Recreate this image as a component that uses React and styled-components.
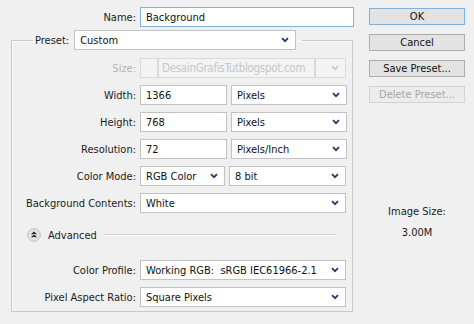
import React from 'react';
import styled, { createGlobalStyle } from 'styled-components';

const GlobalStyle = createGlobalStyle`
  * { box-sizing: border-box; }
  body {
    margin: 0;
    background: #f0f0f0;
    font-family: "DejaVu Sans Condensed", "DejaVu Sans", "Liberation Sans", sans-serif;
    font-stretch: condensed;
    font-size: 11px;
    color: #1b1b1b;
  }
`;

const Dialog = styled.div`
  width: 474px;
  height: 324px;
  display: flex;
  background: #f0f0f0;
`;

const Main = styled.div`
  width: 357px;
  display: flex;
  flex-direction: column;
`;

const Side = styled.div`
  flex: 1;
  padding: 8px 0 0 12px;
  display: flex;
  flex-direction: column;
  align-items: flex-start;
`;

const Row = styled.div`
  display: flex;
  align-items: center;
  height: 20px;
  gap: ${p => p.$gap ?? 4}px;
`;

const NameRow = styled(Row)`
  margin-top: 7px;
`;

const Label = styled.span`
  width: ${p => p.$width}px;
  text-align: right;
  white-space: nowrap;
  color: ${p => (p.$disabled ? '#b4b4b4' : '#1b1b1b')};
`;

const Field = styled.div`
  width: ${p => p.$width}px;
  height: 20px;
  display: flex;
  align-items: center;
  padding: 0 6px 0 5px;
  background: ${p => (p.$disabled ? '#f3f3f3' : '#fff')};
  border: 1px solid ${p => (p.$focus ? '#7eb4ea' : p.$disabled ? '#dadada' : '#c2c2c2')};
  color: ${p => (p.$disabled ? '#c8c8c8' : '#111')};
  white-space: pre;
  overflow: hidden;
`;

const Value = styled.span`
  flex: 1;
`;

const Watermark = styled(Field)`
  font-size: 11.5px;
  letter-spacing: -0.3px;
  padding-left: 3px;
`;

const Group = styled.fieldset`
  margin: 3px 0 0 11px;
  width: 342px;
  padding: 8px 0 4px 0;
  border: 1px solid #c9c9c9;
  box-shadow: inset 1px 1px 0 #fbfbfb;
  display: flex;
  flex-direction: column;
  gap: 7px;
`;

const Legend = styled.legend`
  margin-left: 21px;
  padding: 0 6px 0 2px;
  display: flex;
  align-items: center;
  gap: 5px;
`;

const AdvancedRow = styled.div`
  display: flex;
  align-items: center;
  height: 14px;
  margin: 8px 15px 11px 15px;
  gap: 7px;
`;

const Rule = styled.div`
  flex: 1;
  height: 2px;
  border-top: 1px solid #cfcfcf;
  border-bottom: 1px solid #fafafa;
`;

const Button = styled.div`
  width: 96px;
  height: 17px;
  margin-bottom: 9px;
  display: flex;
  align-items: center;
  justify-content: center;
  background: ${p => (p.$disabled ? '#ececec' : '#e3e3e3')};
  border: 1px solid ${p => (p.$default ? '#7fb0dc' : p.$disabled ? '#d2d2d2' : '#adadad')};
  color: ${p => (p.$disabled ? '#a6a6a6' : '#111')};
`;

const ImageSize = styled.div`
  width: 96px;
  margin-top: 93px;
  display: flex;
  flex-direction: column;
  align-items: center;
  gap: 8px;
  line-height: 13px;
`;

function Chevron({ disabled }) {
  return (
    <svg width="8" height="6" viewBox="0 0 8 6">
      <path d="M1 1.2 L4 4.2 L7 1.2" fill="none" stroke={disabled ? '#c8ccd4' : '#1f3a70'} strokeWidth="1.8" />
    </svg>
  );
}

function CollapseIcon() {
  return (
    <svg width="14" height="14" viewBox="0 0 14 14">
      <circle cx="7" cy="7" r="6.3" fill="#e4e4e4" stroke="#bdbdbd" strokeWidth="1" />
      <path d="M4.6 6.4 L7 4.2 L9.4 6.4 M4.6 9.4 L7 7.2 L9.4 9.4" fill="none" stroke="#2a2a2a" strokeWidth="1.2" />
    </svg>
  );
}

function Select({ width, children, disabled }) {
  return (
    <Field $width={width} $disabled={disabled}>
      <Value>{children}</Value>
      <Chevron disabled={disabled} />
    </Field>
  );
}

const LABEL = 124;

export default function App() {
  return (
    <Dialog>
      <GlobalStyle />
      <Main>
        <NameRow>
          <Label $width={136}>Name:</Label>
          <Field $width={214} $focus>Background</Field>
        </NameRow>
        <Group>
          <Legend>
            <span>Preset:</span>
            <Select width={222}>Custom</Select>
          </Legend>
          <Row $gap={0}>
            <Label $width={128} $disabled style={{ paddingRight: 4 }}>Size:</Label>
            <Field $width={18} $disabled />
            <Watermark $width={157} $disabled>DesainGrafisTutblogspot.com</Watermark>
            <Select width={31} disabled />
          </Row>
          <Row>
            <Label $width={LABEL}>Width:</Label>
            <Field $width={87}>1366</Field>
            <Select width={116}>Pixels</Select>
          </Row>
          <Row>
            <Label $width={LABEL}>Height:</Label>
            <Field $width={87}>768</Field>
            <Select width={116}>Pixels</Select>
          </Row>
          <Row>
            <Label $width={LABEL}>Resolution:</Label>
            <Field $width={87}>72</Field>
            <Select width={116}>Pixels/Inch</Select>
          </Row>
          <Row $gap={4}>
            <Label $width={LABEL}>Color Mode:</Label>
            <Select width={85}>RGB Color</Select>
            <Select width={117}>8 bit</Select>
          </Row>
          <Row>
            <Label $width={LABEL}>Background Contents:</Label>
            <Select width={206}>White</Select>
          </Row>
          <AdvancedRow>
            <CollapseIcon />
            <span>Advanced</span>
            <Rule />
          </AdvancedRow>
          <Row>
            <Label $width={LABEL}>Color Profile:</Label>
            <Select width={206}>Working RGB:  sRGB IEC61966-2.1</Select>
          </Row>
          <Row>
            <Label $width={LABEL}>Pixel Aspect Ratio:</Label>
            <Select width={206}>Square Pixels</Select>
          </Row>
        </Group>
      </Main>
      <Side>
        <Button $default>OK</Button>
        <Button>Cancel</Button>
        <Button>Save Preset...</Button>
        <Button $disabled>Delete Preset...</Button>
        <ImageSize>
          <span>Image Size:</span>
          <span>3.00M</span>
        </ImageSize>
      </Side>
    </Dialog>
  );
}
